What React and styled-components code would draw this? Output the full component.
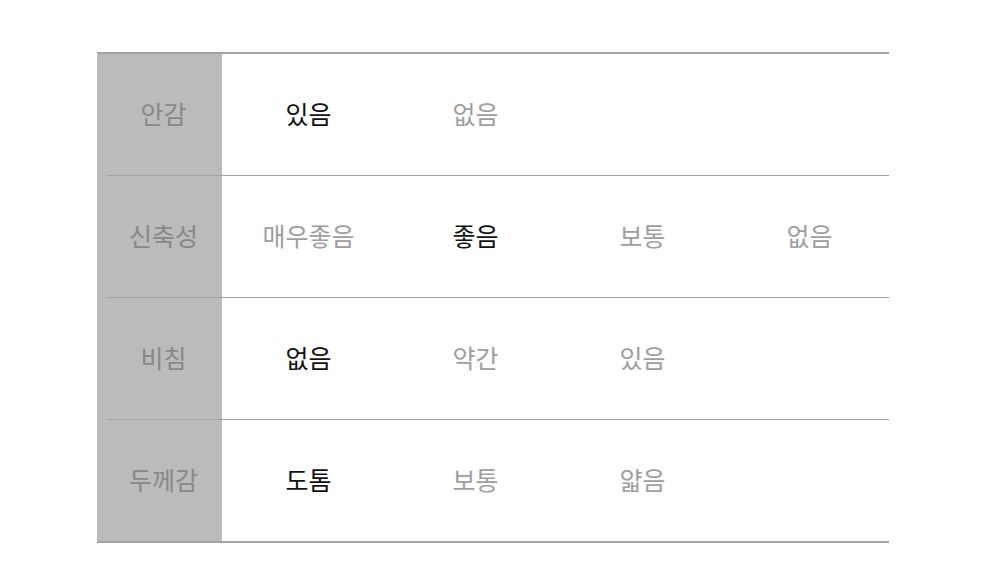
import React from 'react'
import styled, { createGlobalStyle } from 'styled-components'

const GlobalStyle = createGlobalStyle`
    body {
        margin: 0;
        background: #fff;
        font-family: "Noto Sans CJK KR", "Noto Sans", sans-serif;
    }
`

const Page = styled.div`
    padding: 52px 0 0 97px;
`

const Table = styled.div`
    width: 792px;
    border-top: 2px solid #a3a3a3;
    border-bottom: 2px solid #a3a3a3;
    background: linear-gradient(to right, #bbbbbb 125px, #fff 125px);
`

const Row = styled.div`
    display: flex;
    align-items: center;
    box-sizing: border-box;
    height: ${props => props.last ? '121px' : '122px'};
    padding-bottom: 4px;
    margin-left: 10px;
    border-bottom: ${props => props.last ? 'none' : '1px solid #a3a3a3'};
`

const Label = styled.div`
    flex: 0 0 auto;
    width: 113px;
    padding-right: 2px;
    text-align: center;
    font-size: 25px;
    color: #888;
`

const Options = styled.div`
    flex: 1;
    display: grid;
    grid-template-columns: repeat(4, 167px);
    padding-left: 3px;
`

const Option = styled.div`
    text-align: center;
    font-size: 25px;
    color: ${props => props.selected ? '#111' : '#9e9e9e'};
`

const rows = [
    { label: '안감', options: ['있음', '없음'], selected: 0 },
    { label: '신축성', options: ['매우좋음', '좋음', '보통', '없음'], selected: 1 },
    { label: '비침', options: ['없음', '약간', '있음'], selected: 0 },
    { label: '두께감', options: ['도톰', '보통', '얇음'], selected: 0 },
]

const App = () => {
    return (
        <Page>
            <GlobalStyle />
            <Table>
                {rows.map((row, i) => (
                    <Row key={row.label} last={i === rows.length - 1}>
                        <Label>{row.label}</Label>
                        <Options>
                            {row.options.map((opt, j) => (
                                <Option key={opt} selected={j === row.selected}>
                                    {opt}
                                </Option>
                            ))}
                        </Options>
                    </Row>
                ))}
            </Table>
        </Page>
    )
}

export default App
